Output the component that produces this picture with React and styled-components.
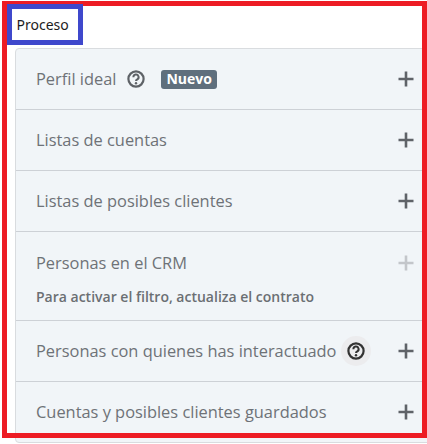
import React from "react";
import styled, { createGlobalStyle } from "styled-components";

const Global = createGlobalStyle`
  html, body { margin: 0; padding: 0; background: #fff; }
  body { font-family: "Open Sans", "Noto Sans", sans-serif; overflow: hidden; }
`;

const Page = styled.div`
  position: relative;
  width: 427px;
  height: 444px;
  overflow: hidden;
  background: #fff;
  padding: 48px 0 0 15px;
  box-sizing: border-box;
`;

const OuterFrame = styled.div`
  position: absolute;
  left: 2px;
  top: 1px;
  width: 425px;
  height: 437px;
  box-sizing: border-box;
  border: 5px solid #ed1c24;
  pointer-events: none;
`;

const TitleFrame = styled.div`
  position: absolute;
  left: 7px;
  top: 4px;
  width: 76px;
  height: 41px;
  box-sizing: border-box;
  border: 5px solid #3f48cc;
  background: #fff;
  padding-left: 4.5px;
  display: flex;
  align-items: center;
`;

const Title = styled.span`
  font-family: "Noto Sans", sans-serif;
  font-size: 14px;
  line-height: 20px;
  color: #1d1c1d;
`;

const Card = styled.div`
  width: 420px;
  box-sizing: border-box;
  border: 1px solid #d9dcdf;
  border-radius: 4px;
  background: #f1f5f8;
`;

const Row = styled.div`
  display: flex;
  flex-direction: column;
  justify-content: ${(p) => (p.$note ? "flex-start" : "center")};
  box-sizing: border-box;
  height: ${(p) => p.$h}px;
  padding: ${(p) => (p.$note ? "16px 20px 0" : "0 20px")};
  border-bottom: ${(p) => (p.$last ? "none" : "1px solid #cdd1d6")};
`;

const Head = styled.div`
  display: flex;
  align-items: center;
  width: 378px;
  height: 30px;
`;

const Label = styled.span`
  font-size: 16.4px;
  line-height: 24px;
  color: #6e7277;
  white-space: nowrap;
`;

const Note = styled.div`
  font-size: 14px;
  font-weight: 600;
  line-height: 18px;
  color: #6b6f73;
  margin-top: 10px;
  white-space: nowrap;
`;

const Badge = styled.span`
  margin-left: 16px;
  height: 19px;
  padding: 0 5px;
  border-radius: 3px;
  background: #5f6f7d;
  color: #fff;
  font-size: 14px;
  font-weight: 700;
  line-height: 18px;
  display: inline-flex;
  align-items: center;
`;

const HelpWrap = styled.span`
  margin-left: ${(p) => (p.$round ? "5px" : "11px")};
  width: ${(p) => (p.$round ? "30px" : "18px")};
  height: ${(p) => (p.$round ? "30px" : "18px")};
  border-radius: 50%;
  background: ${(p) => (p.$round ? "#ececee" : "transparent")};
  color: ${(p) => (p.$round ? "#333" : "#5e6267")};
  display: inline-flex;
  align-items: center;
  justify-content: center;
  flex: none;
`;

const PlusWrap = styled.span`
  margin-left: auto;
  display: inline-flex;
  color: ${(p) => (p.$dim ? "#c3c6ca" : "#5f6368")};
`;

const Help = () => (
  <svg width="18" height="18" viewBox="0 0 18 18" fill="none" stroke="currentColor">
    <circle cx="9" cy="9" r="7.6" strokeWidth="2.2" />
    <path d="M6.4 7.2a2.6 2.6 0 1 1 3.9 2.2c-.9.5-1.3.8-1.3 1.6" strokeWidth="2" />
    <circle cx="9" cy="13.3" r="1.2" fill="currentColor" stroke="none" />
  </svg>
);

const Plus = () => (
  <svg width="16" height="16" viewBox="0 0 16 16" fill="none" stroke="currentColor" strokeWidth="2.6">
    <path d="M8 0.5v15M0.5 8h15" />
  </svg>
);

const Item = ({ label, help, round, badge, note, dim, h = 61, last }) => (
  <Row $h={h} $last={last} $note={!!note}>
    <Head>
      <Label>{label}</Label>
      {help && (
        <HelpWrap $round={round}>
          <Help />
        </HelpWrap>
      )}
      {badge && <Badge>{badge}</Badge>}
      <PlusWrap $dim={dim}>
        <Plus />
      </PlusWrap>
    </Head>
    {note && <Note>{note}</Note>}
  </Row>
);

export default function App() {
  return (
    <Page>
      <Global />
      <Card>
        <Item label="Perfil ideal" help badge="Nuevo" />
        <Item label="Listas de cuentas" />
        <Item label="Listas de posibles clientes" />
        <Item label="Personas en el CRM" dim note="Para activar el filtro, actualiza el contrato" h={89} />
        <Item label="Personas con quienes has interactuado" help round />
        <Item label="Cuentas y posibles clientes guardados" last h={60} />
      </Card>
      <OuterFrame />
      <TitleFrame>
        <Title>Proceso</Title>
      </TitleFrame>
    </Page>
  );
}
